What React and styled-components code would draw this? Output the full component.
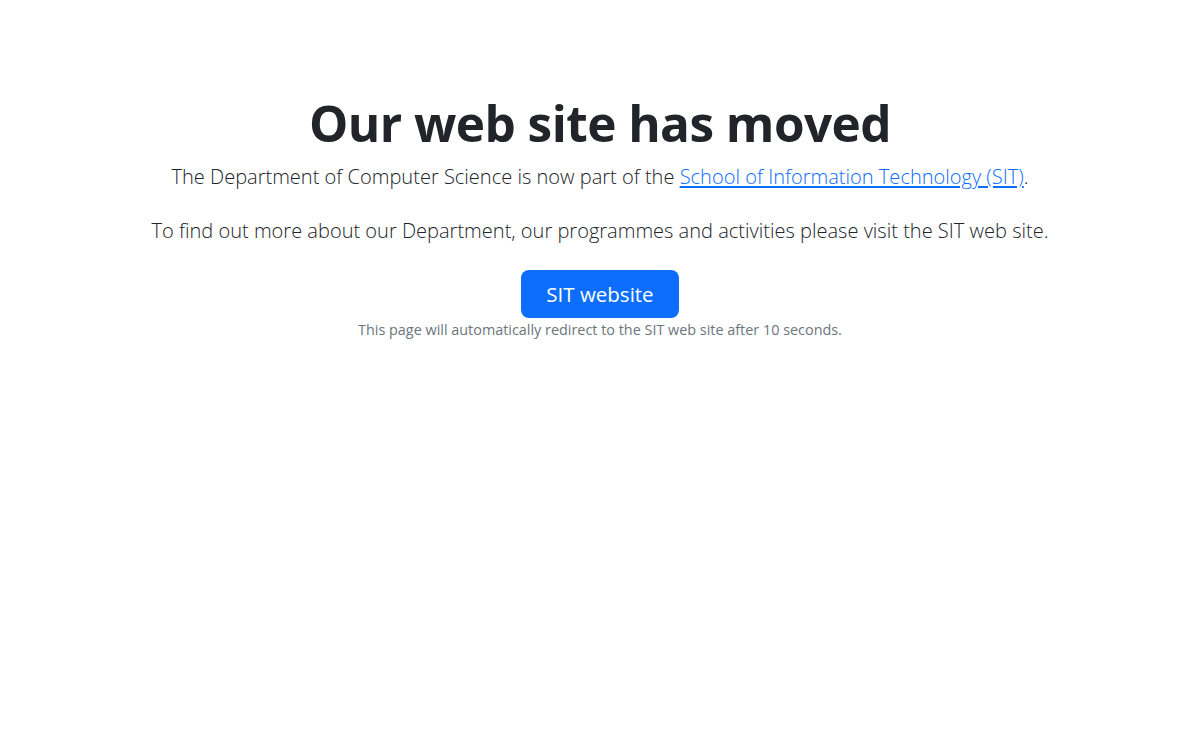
import React from "react";
import styled, { createGlobalStyle } from "styled-components";

const Global = createGlobalStyle`
  html, body { margin: 0; padding: 0; background: #fff; }
  body { font-family: "Open Sans", "Noto Sans", sans-serif; color: #212529; }
`;

const Page = styled.main`
  display: flex;
  flex-direction: column;
  align-items: center;
  text-align: center;
  padding-top: 94px;
`;

const Title = styled.h1`
  margin: 0 0 9px;
  font-size: 49.5px;
  font-weight: 700;
  line-height: 1.2;
  letter-spacing: -0.55px;
`;

const Lead = styled.p`
  margin: ${(p) => p.$top || 0}px 0 0;
  font-size: 20.05px;
  font-weight: 300;
  line-height: 30px;
  color: #212529;
`;

const Link = styled.a`
  color: #0d6efd;
  text-decoration: underline;
`;

const Button = styled.a`
  margin-top: 24px;
  display: inline-flex;
  align-items: center;
  justify-content: center;
  width: 158px;
  height: 48px;
  box-sizing: border-box;
  border-radius: 8px;
  background: #0d6efd;
  color: #fff;
  font-size: 20.5px;
  text-decoration: none;
`;

const Note = styled.small`
  margin-top: 2px;
  font-size: 14.4px;
  color: #6c757d;
  line-height: 20px;
`;

export default function App() {
  return (
    <>
      <Global />
      <Page>
        <Title>Our web site has moved</Title>
        <Lead>
          The Department of Computer Science is now part of the{" "}
          <Link href="#">School of Information Technology (SIT)</Link>.
        </Lead>
        <Lead $top={24}>
          To find out more about our Department, our programmes and activities please visit the SIT web site.
        </Lead>
        <Button href="#">SIT website</Button>
        <Note>This page will automatically redirect to the SIT web site after 10 seconds.</Note>
      </Page>
    </>
  );
}
